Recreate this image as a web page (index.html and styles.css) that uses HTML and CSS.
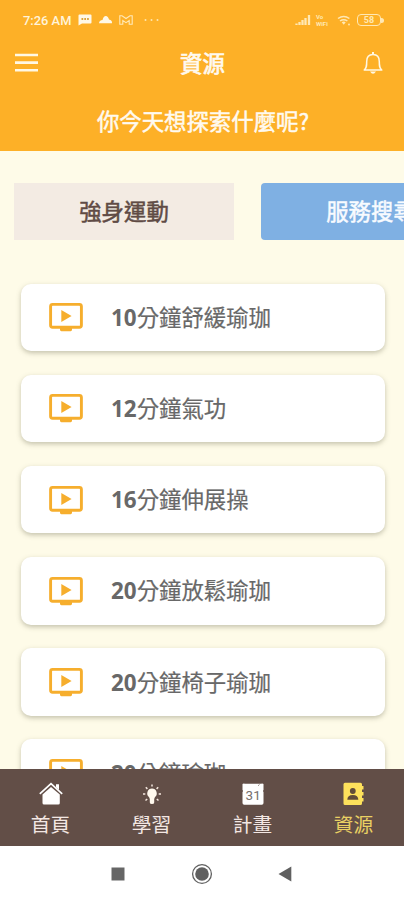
FILE: index.html
```html
<!DOCTYPE html>
<html lang="zh-Hant">
<head>
<meta charset="utf-8">
<title>資源</title>
<link rel="stylesheet" href="styles.css">
</head>
<body>
<svg class="defs" width="0" height="0">
  <symbol id="video" viewBox="0 0 34 30">
    <rect x="1.6" y="2.400" width="30.8" height="22.8" rx="2" fill="none" stroke="#f6ae2d" stroke-width="2.900"/>
    <path d="M11 26h12v1.800a1.400 1.400 0 0 1-1.400 1.400h-9.200a1.400 1.400 0 0 1-1.400-1.400z" fill="#f6ae2d"/>
    <path d="M12.300 8v12l10.300-6z" fill="#f6ae2d"/>
  </symbol>
</svg>
<div class="phone">
  <header class="header">
    <div class="status">
      <span class="time">7:26 AM</span>
      <svg class="notices" width="84" height="16" viewBox="0 0 84 16">
        <path d="M1.500 2.500h11a1 1 0 0 1 1 1v7a1 1 0 0 1-1 1H4l-3.500 2v-10a1 1 0 0 1 1-1z" fill="#fff8e6"/>
        <path d="M3.500 7h1.700M6.300 7h1.700M9.100 7h1.700" stroke="#dca238" stroke-width="1.800"/>
        <path d="M21 11.300q.3-3 3.500-3.200 1-4 3.300-4t3.200 3.500q3.300.6 3 3.700z" fill="#fff8e6"/>
        <path d="M41.800 12.300v-8.600h2.200L48 6.500l4-2.800h2.200v8.600h-3V8.600L48 10.600 44.800 8.600v3.700z" fill="none" stroke="#ffe9b8" stroke-width="1.100"/>
        <g fill="#ffe6ad"><circle cx="67.500" cy="8" r="1"/><circle cx="73.500" cy="8" r="1"/><circle cx="79.500" cy="8" r="1"/></g>
      </svg>
      <span class="spacer"></span>
      <svg class="signal" width="16" height="12" viewBox="0 0 16 12"><path d="M1.500 11V9.500M4.500 11V8M7.500 11V6M10.500 11V4M14 11V1" stroke="#ffe8b4" stroke-width="2.300"/></svg>
      <span class="volte">Vo<br>WiFi</span>
      <svg width="15" height="12" viewBox="0 0 15 12"><path d="M1 4.500q5.700-4.200 11.400 0M3 7q3.700-2.600 7.400 0" fill="none" stroke="#ffe8b4" stroke-width="1.500"/><path d="M4.700 8.200q2-1.300 4 0l-2 2.500z" fill="#ffe8b4"/><circle cx="12" cy="10.500" r=".9" fill="#ffe8b4"/></svg>
      <span class="battery">58</span>
    </div>
    <div class="appbar">
      <svg width="23" height="20" viewBox="0 0 23 20"><path d="M0 2h23M0 9.600h23M0 17.200h23" stroke="#fff8e4" stroke-width="2.600"/></svg>
      <h1>資源</h1>
      <svg width="20" height="24" viewBox="0 0 20 24"><path d="M1.200 19c2.500-2 2.500-4 2.500-8.500C3.700 6 6 3.500 10 3.500s6.300 2.500 6.300 7c0 4.500 0 6.500 2.500 8.500z" fill="none" stroke="#fff8e4" stroke-width="1.500" stroke-linejoin="round"/><path d="M10 1v2.500" stroke="#fff8e4" stroke-width="2"/><path d="M7 20.500h6q-3 4.500-6 0z" fill="#fff8e4"/></svg>
    </div>
    <p class="question">你今天想探索什麼呢?</p>
  </header>
  <main class="content">
    <div class="tabs"><div class="tab">強身運動</div><div class="tab search">服務搜尋</div></div>
    <div class="list">
      <div class="card"><svg class="video"><use href="#video"/></svg><p><b>10</b>分鐘舒緩瑜珈</p></div>
      <div class="card"><svg class="video"><use href="#video"/></svg><p><b>12</b>分鐘氣功</p></div>
      <div class="card"><svg class="video"><use href="#video"/></svg><p><b>16</b>分鐘伸展操</p></div>
      <div class="card"><svg class="video"><use href="#video"/></svg><p><b>20</b>分鐘放鬆瑜珈</p></div>
      <div class="card"><svg class="video"><use href="#video"/></svg><p><b>20</b>分鐘椅子瑜珈</p></div>
      <div class="card"><svg class="video"><use href="#video"/></svg><p><b>20</b>分鐘瑜珈</p></div>
    </div>
  </main>
  <nav class="nav">
    <div class="item">
      <svg width="24" height="24" viewBox="0 0 24 24"><path d="M3.500 12.500L12 5l8.800 7.500V21a1.500 1.500 0 0 1-1.500 1.500H5A1.500 1.500 0 0 1 3.500 21z" fill="#fff"/><path d="M.8 11.800L12 1.700l11.200 10.100" fill="none" stroke="#fff" stroke-width="1.700"/><path d="M17 2.300h3V8l-3-2.700z" fill="#fff"/></svg>
      <span>首頁</span>
    </div>
    <div class="item">
      <svg width="24" height="24" viewBox="0 0 24 24"><path d="M12 6.500a4.800 4.800 0 0 0-3 8.500l.8 2v3.500q0 1.500 2.200 1.500t2.200-1.500V17l.8-2a4.800 4.800 0 0 0-3-8.500z" fill="#fff8ed"/><path d="M12 2.500v2M5.800 5.300l1.600 1.600M18.200 5.300l-1.600 1.600M3 12h2.300M18.700 12H21M5.500 18.500l1.700-1.500M18.500 18.500L16.800 17" stroke="#f5e8df" stroke-width="1.500"/></svg>
      <span>學習</span>
    </div>
    <div class="item">
      <svg width="24" height="24" viewBox="0 0 24 24"><path d="M1.500 2q1-1 2.500-.2h16q1.500-.8 2.500.2v6q-1 1 0 2v11q0 1.700-1.700 1.700H3.200Q1.500 22.700 1.500 21V10q1-1 0-2z" fill="#fff"/><path d="M17 3.800l1.500-1.300" stroke="#9a8d88" stroke-width="1"/><text class="day" x="12.200" y="18.300" text-anchor="middle">31</text></svg>
      <span>計畫</span>
    </div>
    <div class="item active">
      <svg width="24" height="24" viewBox="0 0 24 24"><path d="M3 .8h15.500a1.500 1.500 0 0 1 1.500 1.500V4h1.500v3.500H20V10h1.500v3.500H20V16h1.500v3.500H20v2a1.500 1.500 0 0 1-1.500 1.500H3a1.500 1.500 0 0 1-1.500-1.500V2.300A1.500 1.500 0 0 1 3 .8z" fill="#fde15c"/><circle cx="10.800" cy="9" r="2.900" fill="#604c39"/><path d="M5.300 17.700q0-4.700 5.500-4.700t5.500 4.700z" fill="#604c39"/></svg>
      <span>資源</span>
    </div>
  </nav>
  <footer class="system">
    <svg width="14" height="14" viewBox="0 0 14 14"><path d="M.5.500h13v13H.5z" fill="#666"/></svg>
    <svg width="22" height="22" viewBox="0 0 22 22"><circle cx="11" cy="11" r="9.400" fill="none" stroke="#606060" stroke-width="1.300"/><circle cx="11" cy="11" r="6.800" fill="#606060"/></svg>
    <svg width="14" height="16" viewBox="0 0 14 16"><path d="M12.300.5v15L-.5 8z" fill="#606060"/></svg>
  </footer>
</div>
</body>
</html>
```
FILE: styles.css
```css
* { box-sizing: border-box; margin: 0; }
body { font-family: "Noto Sans", "Noto Sans CJK TC", sans-serif; background: #fff; }
.defs { display: none; }
svg { display: block; flex: none; overflow: visible; }
.phone { width: 404px; height: 900px; display: flex; flex-direction: column; overflow: hidden; }
.header { height: 151px; flex: none; background: #fdb027; color: #fffaf0; }
.status { height: 40px; display: flex; align-items: center; padding: 0 21px 0 23px; }
.time { font: 500 12.900px Roboto, sans-serif; color: #fff4da; width: 55px; white-space: nowrap; }
.spacer { flex: 1; }
.signal { margin-right: 5px; }
.volte { font: 700 6px/7px Roboto, sans-serif; color: #ffe8b4; width: 21px; }
.battery { position: relative; width: 24px; height: 12px; margin: 0 2px 0 5px; border: 1.500px solid #ffe8b4; border-radius: 4px; font: 700 9px/10px Roboto, sans-serif; text-align: center; color: #ffe8b4; }
.battery::after { content: ""; position: absolute; right: -4px; top: 2.500px; width: 3px; height: 5px; border-radius: 0 3px 3px 0; background: #ffe8b4; }
.appbar { height: 46px; display: flex; align-items: center; justify-content: space-between; padding: 0 21px 0 15px; }
h1 { font: 400 22.400px/32px "Noto Sans CJK TC", sans-serif; -webkit-text-stroke: .7px; padding: 0 0 3px 4px; }
.question { font: 400 22.400px/32px "Noto Sans CJK TC", sans-serif; -webkit-text-stroke: .5px; text-align: center; margin-top: 18px; padding-left: 2px; }
.content { flex: 1; min-height: 0; overflow: hidden; background: #fefbe8; }
.tabs { display: flex; gap: 27px; padding: 32px 0 0 14px; }
.tab { width: 220px; height: 57px; flex: none; background: #f3ebe3; color: #604b45; text-align: center; font: 400 22.400px/55px "Noto Sans CJK TC", sans-serif; -webkit-text-stroke: .5px; }
.search { background: #7fb0e3; color: #f8fbff; border-radius: 4px; }
.list { padding: 43.500px 19.500px 0 20.500px; display: flex; flex-direction: column; gap: 23.700px; }
.card { height: 67.500px; flex: none; display: flex; align-items: center; background: #fff; border-radius: 10px; box-shadow: 0 2px 5px rgba(90, 90, 60, .35); padding-left: 28.500px; }
.video { width: 34px; height: 30px; margin-right: 28px; }
.card p { font: 400 22.400px/32px "Noto Sans CJK TC", sans-serif; -webkit-text-stroke: .2px; color: #686868; padding-bottom: 1px; white-space: nowrap; }
.card b { font-family: "Noto Sans", sans-serif; font-weight: 700; -webkit-text-stroke: 0; }
.nav { height: 77px; flex: none; background: #624e47; display: grid; grid-template-columns: repeat(4, 1fr); color: #f3e7e3; }
.item { display: flex; flex-direction: column; align-items: center; padding-top: 13px; }
.item span { font: 400 19.700px/28px "Noto Sans CJK TC", sans-serif; margin-top: 4px; }
.active { color: #e9d063; }
.day { font: 400 13.500px Roboto, sans-serif; fill: #77706d; }
.system { height: 54px; flex: none; background: #fff; display: flex; align-items: center; justify-content: center; gap: 66px; padding-top: 1px; }
```
